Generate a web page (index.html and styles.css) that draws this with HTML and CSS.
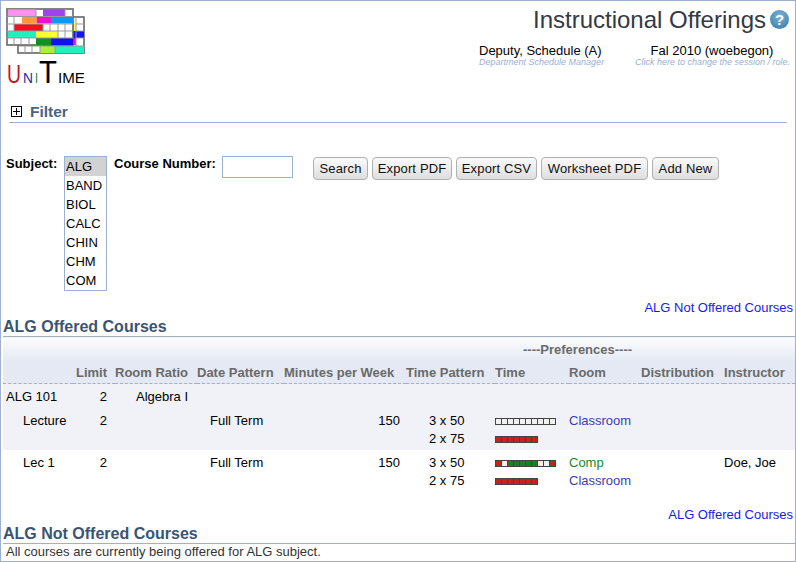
FILE: index.html
```html
<!DOCTYPE html>
<html lang="en">
<head>
    <meta charset="UTF-8">
    <title>Instructional Offerings</title>
    <link rel="stylesheet" href="styles.css">
</head>
<body>
    <div class="page">
        <div class="header">
            <div class="logo">
                <svg class="logo-grid" width="80" height="46" viewBox="0 0 80 46">
                    <rect x="12" y="9" width="66" height="36" fill="#fff" stroke="#666" stroke-width="1.6"/>
                    <rect x="67" y="16" width="3" height="7" fill="#ffff33"/>
                    <rect x="67" y="23" width="11" height="7" fill="#1414f0"/>
                    <rect x="56" y="30" width="14" height="7" fill="#e010c8"/>
                    <rect x="34" y="38" width="15" height="7" fill="#a8f040"/>
                    <rect x="49" y="38" width="29" height="7" fill="#20f0c0"/>
                    <path d="M19 38v7M26 38v7M34 38v7M49 38v7M70 9v29M12 38h66M70 16h8M70 23h8M70 30h8" stroke="#999" fill="none"/>
                    <rect x="1" y="1" width="66" height="36" fill="#fff" stroke="#666" stroke-width="1.6"/>
                    <rect x="2" y="1.5" width="28" height="7" fill="#ff90f0"/>
                    <rect x="37" y="1.5" width="22" height="7" fill="#a040f0"/>
                    <rect x="16" y="8.5" width="15" height="7" fill="#ff9840"/>
                    <rect x="31" y="8.5" width="14" height="7" fill="#f010d0"/>
                    <rect x="45" y="8.5" width="22" height="7" fill="#1098f0"/>
                    <rect x="8" y="16" width="29" height="7" fill="#f01020"/>
                    <rect x="2" y="23" width="28" height="7" fill="#20f0c0"/>
                    <rect x="30" y="23" width="22" height="7" fill="#ffff30"/>
                    <rect x="30" y="30" width="15" height="7" fill="#109020"/>
                    <rect x="45" y="30" width="22" height="7" fill="#1010f0"/>
                    <path d="M1 8.5h66M1 16h66M1 23h66M1 30h66" stroke="#999" fill="none"/>
                    <path d="M30 1v7M59 1v7M8 8.5v7M8 16v7M37 16v7M44 16v7M52 16v7M59 16v7M52 23v7M59 23v7M8 30v7M15 30v7M23 30v7" stroke="#999" fill="none"/>
                </svg>
                <svg class="logo-name" width="80" height="32" viewBox="0 0 80 32">
                    <text x="0" y="29" font-size="26" textLength="14" lengthAdjust="spacingAndGlyphs" fill="#c8141c">U</text>
                    <text x="16" y="29" font-size="15" textLength="10" lengthAdjust="spacingAndGlyphs" fill="#1c2cb0">N</text>
                    <text x="28" y="29" font-size="15" textLength="3" lengthAdjust="spacingAndGlyphs" fill="#128020">I</text>
                    <text x="32" y="29" font-size="31" textLength="18" lengthAdjust="spacingAndGlyphs" fill="#000">T</text>
                    <text x="51" y="29" font-size="15" textLength="27" lengthAdjust="spacingAndGlyphs" fill="#000">IME</text>
                </svg>
            </div>
            <div class="head-right">
                <div class="title-row">
                    <span class="page-title">Instructional Offerings</span>
                    <span class="help-icon">?</span>
                </div>
                <div class="session-row">
                    <div class="user-box">
                        <div class="main-line">Deputy, Schedule (A)</div>
                        <div class="sub-line">Department Schedule Manager</div>
                    </div>
                    <div class="session-box">
                        <div class="main-line">Fal 2010 (woebegon)</div>
                        <div class="sub-line">Click here to change the session / role.</div>
                    </div>
                </div>
            </div>
        </div>

        <div class="filter-head">
            <span class="plus-icon"></span>
            <span class="filter-title">Filter</span>
        </div>

        <div class="filter-form">
            <label class="form-label subject-label">Subject:</label>
            <div class="subject-list">
                <div class="subject-item selected">ALG</div>
                <div class="subject-item">BAND</div>
                <div class="subject-item">BIOL</div>
                <div class="subject-item">CALC</div>
                <div class="subject-item">CHIN</div>
                <div class="subject-item">CHM</div>
                <div class="subject-item">COM</div>
            </div>
            <label class="form-label course-label">Course Number:</label>
            <input type="text" class="course-input">
            <div class="form-buttons">
                <button class="btn btn-search">Search</button>
                <button class="btn btn-pdf">Export PDF</button>
                <button class="btn btn-csv">Export CSV</button>
                <button class="btn btn-sheet">Worksheet PDF</button>
                <button class="btn btn-add">Add New</button>
            </div>
        </div>

        <div class="jump-link first-link"><a href="#not-offered">ALG Not Offered Courses</a></div>
        <h2 class="section-title">ALG Offered Courses</h2>

        <table class="offerings">
            <colgroup>
                <col class="c-name"><col class="c-limit"><col class="c-ratio"><col class="c-date"><col class="c-mins">
                <col class="c-pattern"><col class="c-time"><col class="c-room"><col class="c-dist"><col class="c-inst">
            </colgroup>
            <thead>
                <tr class="head-top">
                    <th colspan="6"></th>
                    <th colspan="3" class="pref-head">----Preferences----</th>
                    <th></th>
                </tr>
                <tr class="head-cols">
                    <th></th>
                    <th class="t-right">Limit</th>
                    <th>Room Ratio</th>
                    <th>Date Pattern</th>
                    <th>Minutes per Week</th>
                    <th>Time Pattern</th>
                    <th>Time</th>
                    <th>Room</th>
                    <th>Distribution</th>
                    <th>Instructor</th>
                </tr>
            </thead>
            <tbody>
                <tr class="row-shaded row-course">
                    <td class="name-cell">ALG 101</td>
                    <td class="limit-cell">2</td>
                    <td class="ratio-cell" colspan="2">Algebra I</td>
                    <td colspan="6"></td>
                </tr>
                <tr class="row-shaded row-class">
                    <td class="name-cell sub-name">Lecture</td>
                    <td class="limit-cell">2</td>
                    <td></td>
                    <td class="date-cell">Full Term</td>
                    <td class="mins-cell">150</td>
                    <td class="pattern-cell">3 x 50<br>2 x 75</td>
                    <td class="time-cell">
                        <div class="time-bar"><i class="w"></i><i class="w"></i><i class="w"></i><i class="w"></i><i class="w"></i><i class="w"></i><i class="w"></i><i class="w"></i><i class="w"></i><i class="w"></i></div>
                        <div class="time-bar"><i class="r"></i><i class="r"></i><i class="r"></i><i class="r"></i><i class="r"></i><i class="r"></i><i class="r"></i></div>
                    </td>
                    <td class="room-cell"><a href="#">Classroom</a></td>
                    <td></td>
                    <td></td>
                </tr>
                <tr class="row-class">
                    <td class="name-cell sub-name">Lec 1</td>
                    <td class="limit-cell">2</td>
                    <td></td>
                    <td class="date-cell">Full Term</td>
                    <td class="mins-cell">150</td>
                    <td class="pattern-cell">3 x 50<br>2 x 75</td>
                    <td class="time-cell">
                        <div class="time-bar"><i class="r"></i><i class="w"></i><i class="g"></i><i class="g"></i><i class="g"></i><i class="g"></i><i class="g"></i><i class="w"></i><i class="w"></i><i class="r"></i></div>
                        <div class="time-bar"><i class="r"></i><i class="r"></i><i class="r"></i><i class="r"></i><i class="r"></i><i class="r"></i><i class="r"></i></div>
                    </td>
                    <td class="room-cell"><a href="#" class="pref-good">Comp</a><br><a href="#">Classroom</a></td>
                    <td></td>
                    <td class="inst-cell">Doe, Joe</td>
                </tr>
            </tbody>
        </table>

        <div class="jump-link second-link"><a href="#">ALG Offered Courses</a></div>
        <h2 class="section-title not-offered" id="not-offered">ALG Not Offered Courses</h2>
        <div class="empty-note">All courses are currently being offered for ALG subject.</div>
    </div>
</body>
</html>
```

FILE: styles.css
```css
html, body {
    margin: 0;
    padding: 0;
    background-color: #fff;
}

body {
    font-family: "Liberation Sans", Arial, sans-serif;
    font-size: 13px;
    color: #000;
    overflow: hidden;
}

a {
    text-decoration: none;
}

.page {
    width: 796px;
    height: 562px;
    box-sizing: border-box;
    border: 1px solid #9cb0d4;
    overflow: hidden;
}

/* header */
.header {
    display: flex;
    justify-content: space-between;
    height: 98px;
}

.logo {
    padding: 7px 0 0 5px;
}

.logo-grid {
    display: block;
}

.logo-name {
    display: block;
    margin-left: 1px;
    font-family: "Liberation Sans", Arial, sans-serif;
}

.head-right {
    display: flex;
    flex-direction: column;
    align-items: flex-end;
    padding: 5px 6px 0 0;
}

.title-row {
    display: flex;
    align-items: center;
    gap: 4px;
    height: 27px;
}

.page-title {
    font-size: 24px;
    color: #333a44;
}

.help-icon {
    width: 19px;
    height: 19px;
    border-radius: 50%;
    background: radial-gradient(circle at 50% 35%, #7fb4d4, #2f78a8);
    color: #fff;
    font-size: 15px;
    font-weight: bold;
    line-height: 19px;
    text-align: center;
}

.session-row {
    display: flex;
    margin-top: 12px;
}

.user-box {
    width: 156px;
}

.session-box {
    width: 154px;
    text-align: center;
}

.main-line {
    font-size: 13px;
    line-height: 12px;
    white-space: nowrap;
}

.sub-line {
    font-size: 9px;
    font-style: italic;
    line-height: 10px;
    color: #9cb0d4;
    white-space: nowrap;
}

/* filter */
.filter-head {
    display: flex;
    align-items: center;
    gap: 8px;
    margin: 0 8px 0 8px;
    padding: 2px 0 0 2px;
    height: 21px;
    border-bottom: 1px solid #9cb0d4;
}

.plus-icon {
    position: relative;
    width: 9px;
    height: 9px;
    border: 1px solid #000;
    margin-bottom: 1px;
}

.plus-icon::before {
    content: "";
    position: absolute;
    left: 1px;
    top: 4px;
    width: 7px;
    height: 1px;
    background-color: #000;
}

.plus-icon::after {
    content: "";
    position: absolute;
    left: 4px;
    top: 1px;
    width: 1px;
    height: 7px;
    background-color: #000;
}

.filter-title {
    font-size: 15.5px;
    font-weight: bold;
    color: #4a6484;
    margin-top: 1px;
}

.filter-form {
    display: flex;
    align-items: flex-start;
    height: 144px;
    margin-top: 33px;
    padding-left: 5px;
}

.form-label {
    font-weight: bold;
    line-height: 16px;
}

.subject-label {
    width: 58px;
}

.subject-list {
    width: 41px;
    height: 133px;
    border: 1px solid #9cb0d4;
}

.subject-item {
    height: 19px;
    line-height: 19px;
    padding-left: 1px;
}

.subject-item.selected {
    background-color: #d2d2d2;
}

.course-label {
    width: 108px;
    margin-left: 7px;
    white-space: nowrap;
}

.course-input {
    width: 69px;
    height: 20px;
    box-sizing: content-box;
    padding: 0;
    border: 1px solid #9cb0d4;
    background-color: #fff;
}

.form-buttons {
    display: flex;
    gap: 4px;
    margin: 1px 0 0 20px;
}

.btn {
    height: 23px;
    padding: 0;
    font-family: "Liberation Sans", Arial, sans-serif;
    font-size: 13px;
    letter-spacing: 0.15px;
    color: #111;
    border: 1px solid #b0b0b0;
    border-radius: 4px;
    background: linear-gradient(#fafafa, #dedede);
    white-space: nowrap;
}

.btn-search { width: 55px; }
.btn-pdf { width: 80px; }
.btn-csv { width: 81px; }
.btn-sheet { width: 107px; }
.btn-add { width: 67px; }

/* sections */
.jump-link {
    text-align: right;
    padding-right: 2px;
    line-height: 15px;
}

.jump-link a {
    color: #1a1ae6;
}

.first-link {
    height: 15px;
}

.section-title {
    margin: 3px 0 0 2px;
    height: 18px;
    font-size: 16px;
    line-height: 18px;
    font-weight: bold;
    color: #3a5474;
}

/* table */
.offerings {
    width: 792px;
    margin-left: 2px;
    table-layout: fixed;
    border-collapse: collapse;
    border-top: 1px solid #a4b0bc;
}

.c-name { width: 70px; }
.c-limit { width: 42px; }
.c-ratio { width: 82px; }
.c-date { width: 87px; }
.c-mins { width: 122px; }
.c-pattern { width: 89px; }
.c-time { width: 74px; }
.c-room { width: 72px; }
.c-dist { width: 83px; }
.c-inst { width: 71px; }

.offerings th {
    padding: 1px 0 0;
    font-size: 13px;
    font-weight: bold;
    text-align: left;
    color: #6a6a6a;
    white-space: nowrap;
}

.head-top {
    height: 24px;
}

.head-top th {
    background: linear-gradient(#fbfcfe, #e4e9f3);
}

.pref-head {
    padding-left: 28px !important;
}

.head-cols {
    height: 23px;
    background-color: #e4e9f3;
    border-bottom: 1px dashed #9cb0d4;
}

.head-cols .t-right {
    text-align: right;
    padding-right: 8px;
}

.row-shaded {
    background-color: #f0f2f8;
}

.offerings td {
    padding: 0;
    vertical-align: top;
    line-height: 18px;
}

.row-course td {
    height: 24px;
    padding-top: 4px;
    box-sizing: border-box;
}

.row-class td {
    padding-top: 4px;
    height: 42px;
    box-sizing: border-box;
}

.name-cell {
    padding-left: 3px !important;
}

.sub-name {
    padding-left: 20px !important;
}

.limit-cell {
    text-align: right;
    padding-right: 8px !important;
}

.ratio-cell {
    padding-left: 21px !important;
}

.date-cell {
    padding-left: 13px !important;
}

.mins-cell {
    text-align: right;
    padding-right: 6px !important;
}

.pattern-cell {
    padding-left: 23px !important;
}

.room-cell a {
    color: #3c3cb4;
}

.room-cell a.pref-good {
    color: #168c28;
}

.time-cell {
    padding-top: 10px !important;
}

.time-bar {
    display: flex;
    width: fit-content;
    border: 1px solid #444;
    background-color: #444;
    gap: 1px;
}

.time-bar + .time-bar {
    margin-top: 11px;
}

.time-bar i {
    display: block;
    width: 5px;
    height: 5px;
}

.time-bar i.w {
    background-color: #f0f0f0;
}

.time-bar i.r {
    background-color: #c8201e;
}

.time-bar i.g {
    background-color: #168228;
}

.second-link {
    margin-top: 15px;
}

.not-offered {
    margin-top: 3px;
}

.empty-note {
    margin-left: 2px;
    padding-left: 3px;
    height: 17px;
    line-height: 15px;
    font-size: 13px;
    color: #333;
    border-top: 1px solid #9cb0d4;
}
```
